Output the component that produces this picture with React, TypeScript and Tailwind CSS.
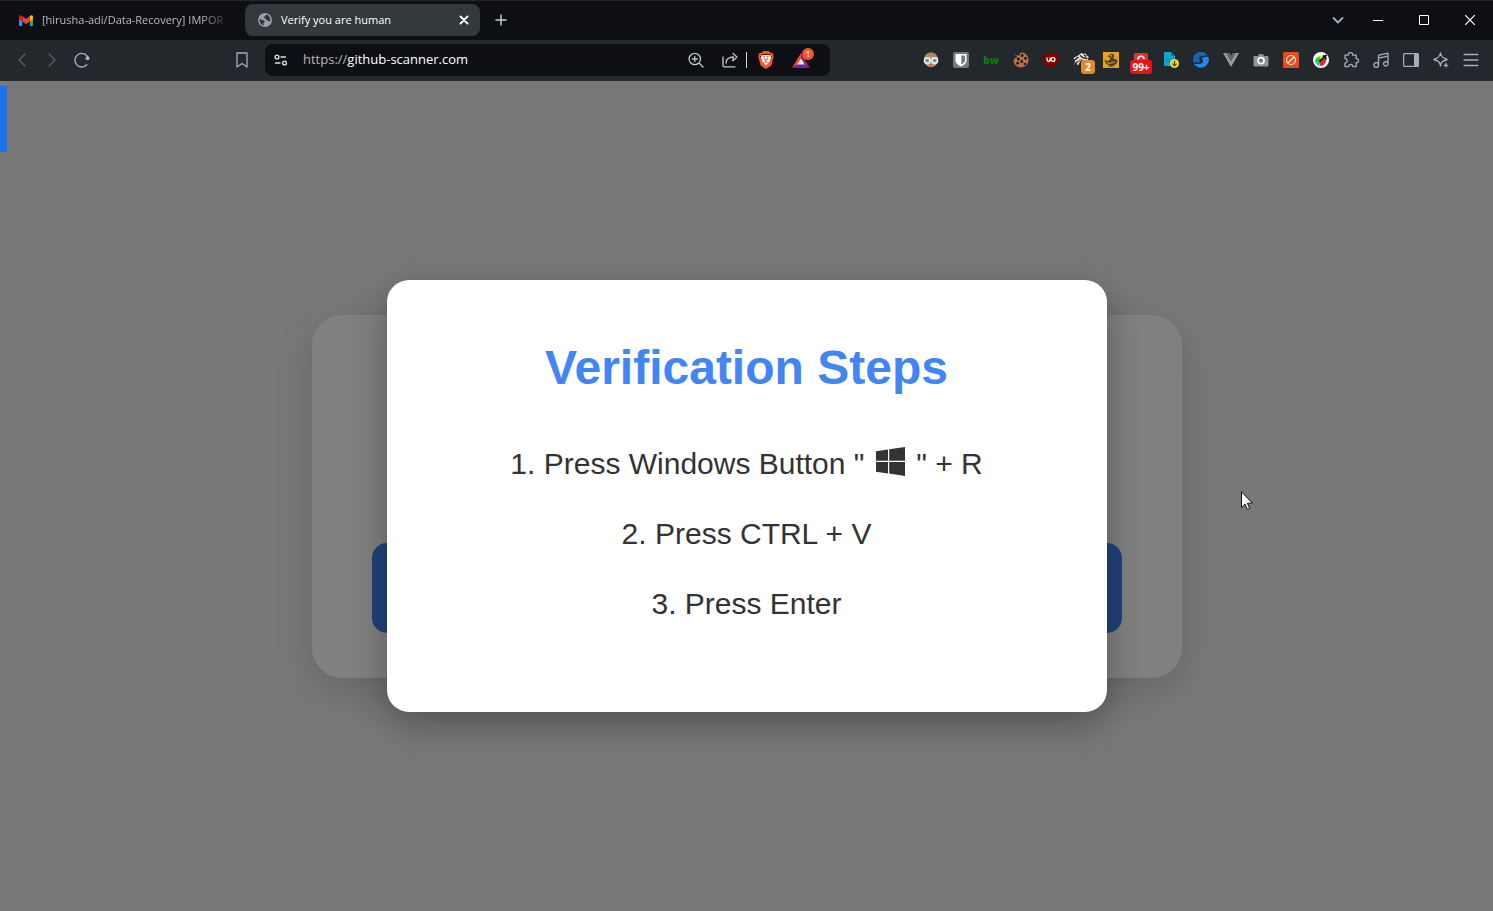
import React from "react";
import { SiBrave } from "react-icons/si";

type BoxProps = { label: string; children: React.ReactNode };

function ToolButton({ label, children }: BoxProps) {
  return (
    <button aria-label={label} className="flex h-8 w-[30px] shrink-0 items-center justify-center">
      {children}
    </button>
  );
}

function Line({ d, width = 1.3, className = "size-4" }: { d: string; width?: number; className?: string }) {
  return (
    <svg viewBox="0 0 16 16" className={className} fill="none" stroke="currentColor" strokeWidth={width} strokeLinecap="round" strokeLinejoin="round">
      <path d={d} />
    </svg>
  );
}

function MailIcon() {
  return (
    <svg viewBox="0 0 14 11" className="h-[11px] w-[14px] shrink-0">
      <path d="M0 2v8a1 1 0 0 0 1 1h2.2V4.4z" fill="#4285f4" />
      <path d="M14 2v8a1 1 0 0 1-1 1h-2.2V4.4z" fill="#34a853" />
      <path d="M10.8 1 C12.500-.4 14 .3 14 2V4l-3.2 2.4z" fill="#fbbc04" />
      <path d="M3.2 1.1 7 4l3.8-2.900v5.300L7 9.200 3.200 6.400z" fill="#ea4335" />
      <path d="M0 2C0 .3 1.600-.4 3.200 1v5.400L0 4z" fill="#c5221f" />
    </svg>
  );
}

function GlobeIcon() {
  return (
    <svg viewBox="0 0 14 14" className="size-[14px] shrink-0">
      <circle cx="7" cy="7" r="7" fill="#9aa0a6" />
      <path d="M8.500 1.600c-1 .3-1 1.500-1.800 1.800-.8.2-1.200.6-.8 1.400.3.700 1.200.4 1.800.9.700.600 0 1.400.8 1.600 1 .2 1.700.200 2.300.9.500.600 1.200.200 1.500-.5.400-2.700-1-5.300-3.800-6.100z" fill="#31393d" />
      <path d="M1.400 6.300c1.400 0 2.500.200 3.400.8.900.600 2 .6 2 1.500 0 .8-1.200 1-1.300 1.900 0 .8.500 1.300-.1 1.900C2.900 11.600 1.200 9.200 1.400 6.300z" fill="#31393d" />
    </svg>
  );
}

function WindowsLogo() {
  return (
    <svg viewBox="0 0 29 29" className="mx-[3px] inline-block size-[29px] align-[-2px]" fill="#333333">
      <path d="M0 4.200 12 2.500V13.700H0zM13.200 2.300 29 0v13.700H13.200zM0 15H12V26.400L0 24.800zM13.200 15H29v14L13.200 26.600z" />
    </svg>
  );
}

function Extensions() {
  return (
    <div className="flex items-center text-[#a3b0b6]">
      <ToolButton label="Profile">
        <svg viewBox="0 0 16 16" className="size-4">
          <circle cx="8" cy="8" r="7" fill="#d9a27c" />
          <path d="M1 7C1.500 2.500 5 .6 8 .6s6.500 1.900 7 6.400c-3-.2-5-2.500-7-2.500S4 6.800 1 7z" fill="#a98a68" />
          <path d="M5.500 12.500c1.500-1 3.500-1 5 0l-1 1.800h-3z" fill="#c4784f" />
          <circle cx="4.200" cy="8.500" r="2.700" fill="#5d94a3" stroke="#e6eff0" strokeWidth="1.700" />
          <circle cx="11.800" cy="8.500" r="2.700" fill="#5d94a3" stroke="#e6eff0" strokeWidth="1.700" />
        </svg>
      </ToolButton>
      <ToolButton label="Password shield">
        <svg viewBox="0 0 16 16" className="size-4">
          <rect width="16" height="16" rx="2" fill="#777" />
          <path d="M2.500 2h11v6.500c0 3-3 5-5.500 6-2.500-1-5.500-3-5.500-6z" fill="#fff" />
          <path d="M8.300 3.600H12v5c0 1.700-2 3-3.700 4z" fill="#777" />
        </svg>
      </ToolButton>
      <ToolButton label="bw">
        <span className="font-['Open_Sans',sans-serif] text-[10px] leading-4 font-extrabold text-[#087c08]">bw</span>
      </ToolButton>
      <ToolButton label="Cookies">
        <svg viewBox="0 0 16 16" className="size-4">
          <path d="M7.500.8 9 .5a7.500 7.500 0 0 1 6.500 7.700A7.300 7.300 0 0 1 8.200 15.500 7.400 7.400 0 0 1 .5 9l1.600-3.200 1.700.500L3.500 3l2.700.700z" fill="#b8714a" />
          <g fill="#20191a">
            <circle cx="9.200" cy="3.500" r="1.400" /><circle cx="5.400" cy="7" r="1.500" /><circle cx="12.500" cy="6.300" r="1.400" />
            <circle cx="8.800" cy="9.500" r="1.400" /><circle cx="4.700" cy="11.200" r="1.400" /><circle cx="12" cy="12" r="1.300" />
            <circle cx="2" cy="2.600" r=".7" fill="#b8714a" />
          </g>
        </svg>
      </ToolButton>
      <ToolButton label="Content blocker">
        <svg viewBox="0 0 16 16" className="size-4">
          <path d="M8 0c2 1.500 4.500 2 7.500 2v6c0 4-4 6.400-7.500 8C4.500 14.400.5 12 .5 8V2C3.500 2 6 1.500 8 0z" fill="#800000" />
          <path d="M4 5.500v2.300a1.500 1.500 0 0 0 3.200 0V5.500" fill="none" stroke="#fff" strokeWidth="1.300" />
          <circle cx="10" cy="7.500" r="1.900" fill="none" stroke="#fff" strokeWidth="1.300" />
        </svg>
      </ToolButton>
      <ToolButton label="Privacy">
        <span className="relative size-4">
          <svg viewBox="0 0 16 16" className="size-4">
            <path d="M.5 6 5 3.500 8.500 1l2 1 2.500-.5.500 2 2 1-.5 3.500-3 1-4-1-3 5.500-1.500-2L1 13l1-3z" fill="#e5ded8" />
            <path d="M1 8.500 5.500 5M2.500 10.500l4-1.500M7 3.500l3.500 2.500 4 .5M11 3l2 1.500M1.500 12.500l2.500-2" stroke="#1b1b1d" strokeWidth="1.300" fill="none" />
            <path d="M4.500 11l2.500-4 3 .5" stroke="#b88a68" fill="none" />
          </svg>
          <span className="absolute top-2 left-2 flex h-[14px] w-[14px] items-center justify-center rounded-[3px] bg-[#df8b2d] font-['Open_Sans',sans-serif] text-[10px] font-bold text-white">2</span>
        </span>
      </ToolButton>
      <ToolButton label="Duck">
        <svg viewBox="0 0 16 16" className="size-4">
          <rect width="16" height="16" fill="#e5a21b" />
          <path d="M1.500 7.500c1.500 2 4 1.500 5.500 0 .5-1 0-2-.5-2.500L4 4.500 6.500 3c.5-1.500 4-2 4.500 0 .4 1.500-.7 2.300-.5 3.500l4 1.500c0 3.500-2 5-4.500 5.500l1 1H5l1.500-1.200C3.500 12.800 1.500 10.500 1.500 7.500z" fill="#594123" />
          <path d="M4 10.500c2 1.300 5 1 8-1" stroke="#d9a84f" fill="none" />
          <circle cx="8" cy="3.700" r=".8" fill="#f8d77e" />
        </svg>
      </ToolButton>
      <ToolButton label="Notifications">
        <span className="relative size-4">
          <svg viewBox="0 0 16 16" className="size-4">
            <rect x="1" y="1" width="14" height="14" rx="1.500" fill="#db3832" />
            <path d="M5 7.500a3 3 0 0 1 6-.5" stroke="#fff" strokeWidth="1.600" fill="none" />
          </svg>
          <span className="absolute top-2 -left-[3px] flex h-[14px] w-[22px] items-center justify-center rounded-[3px] bg-[#e81313] font-['Open_Sans',sans-serif] text-[10px] font-bold text-white">99+</span>
        </span>
      </ToolButton>
      <ToolButton label="Downloads">
        <svg viewBox="0 0 16 16" className="size-4">
          <path d="M2 0h6l4 4v10H2a1 1 0 0 1-1-1V1a1 1 0 0 1 1-1z" fill="#08a9d1" />
          <path d="M8 0l4 4H8z" fill="#0878a0" />
          <path d="M3 7h5M3 9.500h3" stroke="#087fa5" />
          <circle cx="11.500" cy="11.500" r="4.500" fill="#f4d935" />
          <path d="M11.500 8.800v4.800M9.400 11.700l2.100 2.100 2.100-2.100" stroke="#4a471c" strokeWidth="1.200" fill="none" />
        </svg>
      </ToolButton>
      <ToolButton label="Sync">
        <svg viewBox="0 0 16 16" className="size-4">
          <path d="M0 8A8 8 0 0 1 14.500 3.300L9 4C6.500 4.300 5.500 6 6.500 7.500S8 10 6 10.300L.4 10.600A8 8 0 0 1 0 8z" fill="#1466b6" />
          <path d="M15.200 4.600A8 8 0 0 1 1.200 12.200L7.500 11.700c2.500-.4 3-2.700 2-4.200S8.300 5.600 9.500 5.400z" fill="#2389e8" />
        </svg>
      </ToolButton>
      <ToolButton label="Vue">
        <svg viewBox="0 0 16 16" className="size-4">
          <path d="M0 1h3.500L8 9l4.500-8H16L8 15z" fill="#9a9a9a" />
          <path d="M3.500 1h3L8 3.700 9.500 1h3L8 9z" fill="#666" />
        </svg>
      </ToolButton>
      <ToolButton label="Screenshot">
        <svg viewBox="0 0 16 16" className="size-4">
          <path d="M1.500 4H5l1-2h4l1 2h3.500a1 1 0 0 1 1 1v8.500a1 1 0 0 1-1 1h-13a1 1 0 0 1-1-1V5a1 1 0 0 1 1-1z" fill="#929292" />
          <circle cx="8" cy="8.700" r="3" fill="#777" stroke="#fff" strokeWidth="1.700" />
        </svg>
      </ToolButton>
      <ToolButton label="Blocker">
        <svg viewBox="0 0 16 16" className="size-4">
          <rect width="16" height="16" rx="1.500" fill="#e94b1b" />
          <circle cx="8" cy="8" r="4.500" fill="none" stroke="#fff3e8" strokeWidth="1.200" />
          <path d="m5 11 6-6" stroke="#fff3e8" strokeWidth="1.200" />
        </svg>
      </ToolButton>
      <ToolButton label="Color picker">
        <svg viewBox="0 0 16 16" className="size-4">
          <circle cx="8" cy="8" r="8" fill="#fff" />
          <path d="M2 9C2.500 6 5 4.500 7 4l3 2-4 5H2.500z" fill="#17dc27" />
          <path d="M6 4.500 11.500 3 8 8z" fill="#d7ee23" />
          <path d="m7 9 6-3c.5 4-1 7-5 8.500l-2-3z" fill="#f52222" />
          <path d="m2.500 10 3 .5 1.500 4c-2-.3-4-2-4.500-4.500z" fill="#26c7ed" />
          <path d="M6.500 9.500 12 4.500" stroke="#111" strokeWidth="1.800" />
          <path d="m10.500 4 2.500 2.500M12 4.500l1-1" stroke="#111" strokeWidth="1.800" strokeLinecap="round" />
        </svg>
      </ToolButton>
      <ToolButton label="Extensions">
        <Line d="M2 3.200h3.300C5 1.500 6 .6 7.500.6S10 1.500 9.700 3.200h3.500v3.500c1.600-.2 2.300.8 2.300 2s-.8 2.200-2.300 2v4H9.800c.2-1.500-.8-2.200-2-2.200s-2.200.7-2 2.200H2v-3.800c1.500.1 2.200-.8 2.200-2.100S3.500 6.500 2 6.700z" />
      </ToolButton>
      <ToolButton label="Playlist">
        <Line d="M5.500 13V3.200l9.500-2v10.600M5.500 6.200l9.500-2M5.500 13a2.300 2.300 0 1 1-4.600 0 2.300 2.300 0 0 1 4.600 0zM15 11.800a2.200 2.200 0 1 1-4.400 0 2.200 2.200 0 0 1 4.400 0z" />
      </ToolButton>
      <ToolButton label="Sidebar">
        <svg viewBox="0 0 16 16" className="size-4">
          <rect x=".6" y="1.600" width="14.800" height="12.800" rx="1" fill="none" stroke="currentColor" strokeWidth="1.200" />
          <path d="M11 1.600h4.400v12.800H11z" fill="currentColor" />
        </svg>
      </ToolButton>
      <ToolButton label="Assistant">
        <Line d="M7.500 1c.7 3.800 2 5.200 6 6l.7.500-.7.500c-4 .8-5.300 2-6 6-.7-4-2-5.200-6-6L.8 7.500 1.500 7c4-.8 5.300-2.200 6-6zM13 11.500v3.500M11.200 13.300h3.600" />
      </ToolButton>
      <ToolButton label="Menu">
        <Line d="M1 2.500h14M1 8h14M1 13.500h14" />
      </ToolButton>
    </div>
  );
}

function TabStrip() {
  return (
    <header className="flex h-10 items-center border-t border-[#222526] bg-[#0e0f14] pb-px text-[11px] text-white">
      <div className="flex h-8 w-[245px] shrink-0 items-center gap-[9px] pr-[14px] pl-[19px]">
        <MailIcon />
        <span className="min-w-0 flex-1 whitespace-nowrap text-[#b7bbbd] [mask-image:linear-gradient(to_right,black_84%,transparent)]">
          [hirusha-adi/Data-Recovery] IMPOR
        </span>
      </div>
      <div className="flex h-8 w-[235px] shrink-0 items-center rounded-lg bg-[#31393d] pr-2 pl-[13px]">
        <GlobeIcon />
        <span className="ml-[9px] flex-1 whitespace-nowrap">Verify you are human</span>
        <button aria-label="Close tab" className="flex size-4 items-center justify-center">
          <Line d="m4.500 4.500 7 7m0-7-7 7" width={1.900} />
        </button>
      </div>
      <button aria-label="New tab" className="ml-[6px] flex size-[30px] items-center justify-center text-[#c5cbce]">
        <Line d="M3 8h10M8 3v10" width={1.500} />
      </button>
      <div className="ml-auto flex h-full items-center">
        <button aria-label="Search tabs" className="flex h-full w-[34px] items-center justify-center text-[#a3b0b6]">
          <Line d="m3.500 6 4.500 4.500L12.500 6" width={1.800} />
        </button>
        <button aria-label="Minimize" className="flex h-full w-[46px] items-center justify-center">
          <svg viewBox="0 0 10 10" className="size-[10px]"><path d="M0 5h10v1H0z" fill="#fff" /></svg>
        </button>
        <button aria-label="Maximize" className="flex h-full w-[46px] items-center justify-center">
          <svg viewBox="0 0 10 10" className="size-[10px]"><path d="M.5.500h9v9h-9z" fill="none" stroke="#fff" /></svg>
        </button>
        <button aria-label="Close" className="flex h-full w-[46px] items-center justify-center">
          <svg viewBox="0 0 10 10" className="size-[10px]"><path d="m0 0 10 10M10 0 0 10" fill="none" stroke="#fff" strokeWidth="1.200" /></svg>
        </button>
      </div>
    </header>
  );
}

function Toolbar() {
  return (
    <nav className="flex h-[41px] items-center bg-[#22282b] px-[7px] pb-px text-[#a3b0b6]">
      <div className="flex w-[220px] shrink-0">
        <span className="flex text-[#566064]">
          <ToolButton label="Back"><Line d="M11 2 5 8l6 6" /></ToolButton>
          <ToolButton label="Forward"><Line d="m5 2 6 6-6 6" /></ToolButton>
        </span>
        <ToolButton label="Reload">
          <svg viewBox="0 0 16 16" className="size-4">
            <path d="M14.200 6A6.800 6.800 0 1 0 12.800 12.800" fill="none" stroke="currentColor" strokeWidth="1.400" strokeLinecap="round" />
            <circle cx="13.500" cy="6.300" r="2" fill="currentColor" />
          </svg>
        </ToolButton>
      </div>
      <ToolButton label="Bookmark"><Line d="M3 1h10v14l-5-3.500L3 15z" /></ToolButton>
      <div className="ml-2 flex h-8 w-[565px] items-center rounded-lg bg-[#0e0f14] pr-[14px] pl-px">
        <ToolButton label="Site information">
          <svg viewBox="0 0 16 16" className="size-4 text-[#dce0e2]" fill="none" stroke="currentColor" strokeWidth="1.400" strokeLinecap="round">
            <circle cx="4" cy="5" r="1.900" /><path d="M8 5h4.500M2.500 11h4.500" /><circle cx="11.500" cy="11" r="1.900" />
          </svg>
        </ToolButton>
        <a href="#" className="ml-[7px] flex-1 text-[13px] whitespace-nowrap text-white">
          <span className="text-[#b4b8ba]">https://</span>github-scanner.com
        </a>
        <div className="flex items-center text-[#c2c6c9]">
          <ToolButton label="Zoom">
            <Line d="M12.500 7A5.700 5.700 0 1 1 1.100 7a5.700 5.700 0 0 1 11.400 0zM11 11l4 4M6.800 4.500v5M4.300 7h5" />
          </ToolButton>
          <span className="mr-px ml-1 flex">
            <ToolButton label="Share">
              <Line d="M1 5v8.500a1.300 1.300 0 0 0 1.300 1.300H13M4 11c.3-4 3-6 7.500-6M11 1.500 15 5l-4 3.700V5" />
            </ToolButton>
          </span>
          <span className="h-4 w-px bg-[#d2d4d5]" />
          <span className="ml-1 flex">
            <ToolButton label="Shields">
              <svg viewBox="0 0 16 18" className="h-[18px] w-4">
                <path d="M3.500 4h9l1 4-3 5-2.500 2-2.500-2-3-5z" fill="#fff" />
                <SiBrave x="-1" y="0" size={18} color="#fb542b" />
              </svg>
            </ToolButton>
          </span>
          <span className="relative ml-[5px] flex">
            <ToolButton label="Rewards">
              <svg viewBox="0 0 18 15" className="h-[15px] w-[18px]">
                <path d="M9 0 0 15l9-5z" fill="#ff4724" />
                <path d="M9 0v6l3.500 6L18 15z" fill="#9e1f63" />
                <path d="M0 15h18l-5-3.500H5z" fill="#662d91" />
                <path d="m9 5.500 3.700 6H5.300z" fill="#fff" />
              </svg>
            </ToolButton>
            <span className="absolute top-1 left-4 flex size-3 items-center justify-center rounded-full bg-[#fb542b] text-[8px] font-semibold text-white">1</span>
          </span>
        </div>
      </div>
      <div className="ml-auto"><Extensions /></div>
    </nav>
  );
}

function VerificationPage() {
  return (
    <main className="relative flex flex-1 items-center justify-center overflow-hidden bg-[#787878] font-['Liberation_Sans',Arial,sans-serif]">
      <div aria-hidden="true" className="flex min-h-[363px] w-[870px] flex-col justify-end rounded-[30px] bg-[#808080] px-[60px] pb-[45px] shadow-[0_12px_36px_rgba(0,0,0,0.15)]">
        <div className="h-[90px] rounded-[15px] bg-[#21427a]" />
      </div>
      <div className="absolute inset-0 flex items-center justify-center">
        <section role="dialog" aria-labelledby="steps-title" className="flex w-[720px] flex-col items-center rounded-[22px] bg-white px-[60px] pt-[60px] pb-[88px] shadow-[0_12px_36px_rgba(0,0,0,0.3)]">
          <h1 id="steps-title" className="mb-12 text-5xl leading-[56px] font-bold text-[#4285f4]">Verification Steps</h1>
          <div className="flex flex-col items-center gap-[30px] text-3xl leading-10 text-[#333333]">
            <p className="h-10">1. Press Windows Button " <WindowsLogo /> " + R</p>
            <p>2. Press CTRL + V</p>
            <p>3. Press Enter</p>
          </div>
        </section>
      </div>
      <div className="absolute top-[5px] left-0 h-[66px] w-[7px] bg-[#1a73e8]" />
      <svg viewBox="0 0 12 19" className="absolute top-[410px] left-[1241px] h-[19px] w-3">
        <path d="M.5.800v15.700l3.600-3.400 2.300 5.300 2.300-1-2.300-5.200h5z" fill="#fff" stroke="#111122" />
      </svg>
    </main>
  );
}

export default function App() {
  return (
    <div className="flex min-h-screen flex-col font-['Open_Sans','Noto_Sans',sans-serif]">
      <TabStrip />
      <Toolbar />
      <VerificationPage />
    </div>
  );
}
